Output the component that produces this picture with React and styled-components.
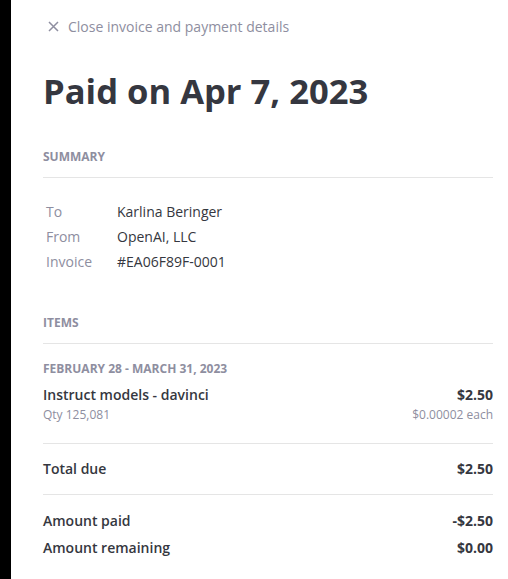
import React from 'react';
import styled, { createGlobalStyle } from 'styled-components';

const GlobalStyle = createGlobalStyle`
    html, body {
        margin: 0;
        padding: 0;
        background: #fff;
    }
    body {
        font-family: 'Open Sans', 'Noto Sans', sans-serif;
        color: #353740;
    }
`;

const Page = styled.div`
    display: flex;
    min-height: 579px;
`;

const Strip = styled.div`
    width: 11px;
    flex-shrink: 0;
    background: #000;
`;

const Content = styled.div`
    flex: 1;
    padding: 0 15px 0 32px;
`;

const CloseLink = styled.a`
    display: flex;
    align-items: center;
    gap: 9px;
    margin-top: 16px;
    padding-left: 5px;
    font-size: 14px;
    color: #8e8ea0;
    text-decoration: none;
    height: 20px;
`;

const Title = styled.h1`
    margin: 33px 0 0;
    font-size: 34.6px;
    line-height: 44px;
    font-weight: 700;
    color: #353740;
`;

const SectionHead = styled.div`
    margin-top: ${p => p.top}px;
    padding-bottom: 12px;
    border-bottom: 1px solid #e5e5e5;
    font-size: 12px;
    line-height: 16px;
    font-weight: 700;
    color: #8e8ea0;
    text-transform: uppercase;
`;

const Table = styled.table`
    margin-top: 21px;
    border-collapse: collapse;
    font-size: 14px;
    td {
        padding: 0 3px;
        height: 25px;
    }
`;

const Label = styled.td`
    color: #8e8ea0;
    width: 65px;
`;

const Value = styled.td`
    color: #353740;
`;

const Period = styled.div`
    margin-top: 17px;
    font-size: 12px;
    line-height: 16px;
    font-weight: 700;
    color: #8e8ea0;
`;

const Row = styled.div`
    display: flex;
    justify-content: space-between;
    align-items: baseline;
    font-size: ${p => (p.small ? 12 : 14)}px;
    line-height: ${p => (p.small ? 16 : 24)}px;
    color: ${p => (p.small ? '#8e8ea0' : '#353740')};
    font-weight: ${p => (p.small ? 400 : 600)};
    b {
        font-weight: 700;
    }
`;

const Block = styled.div`
    padding: ${p => p.pad};
    border-bottom: ${p => (p.line ? '1px solid #e5e5e5' : 'none')};
`;

const App = () => (
    <>
        <GlobalStyle />
        <Page>
            <Strip />
            <Content>
                <CloseLink href="#">
                    <svg width="11" height="11" viewBox="0 0 11 11">
                        <path d="M1 1 L10 10 M10 1 L1 10" stroke="#8e8ea0" strokeWidth="1.5" />
                    </svg>
                    Close invoice and payment details
                </CloseLink>
                <Title>Paid on Apr 7, 2023</Title>
                <SectionHead top={36}>Summary</SectionHead>
                <Table>
                    <tbody>
                        <tr>
                            <Label>To</Label>
                            <Value>Karlina Beringer</Value>
                        </tr>
                        <tr>
                            <Label>From</Label>
                            <Value>OpenAI, LLC</Value>
                        </tr>
                        <tr>
                            <Label>Invoice</Label>
                            <Value>#EA06F89F-0001</Value>
                        </tr>
                    </tbody>
                </Table>
                <SectionHead top={41}>Items</SectionHead>
                <Period>FEBRUARY 28 - MARCH 31, 2023</Period>
                <Block pad="6px 0 20px" line>
                    <Row>
                        <span>Instruct models - davinci</span>
                        <b>$2.50</b>
                    </Row>
                    <Row small>
                        <span>Qty 125,081</span>
                        <span>$0.00002 each</span>
                    </Row>
                </Block>
                <Block pad="13px 0 13px" line>
                    <Row>
                        <span>Total due</span>
                        <b>$2.50</b>
                    </Row>
                </Block>
                <Block pad="14px 0 0">
                    <Row>
                        <span>Amount paid</span>
                        <b>-$2.50</b>
                    </Row>
                    <Row style={{ marginTop: 3 }}>
                        <span>Amount remaining</span>
                        <b>$0.00</b>
                    </Row>
                </Block>
            </Content>
        </Page>
    </>
);

export default App;
